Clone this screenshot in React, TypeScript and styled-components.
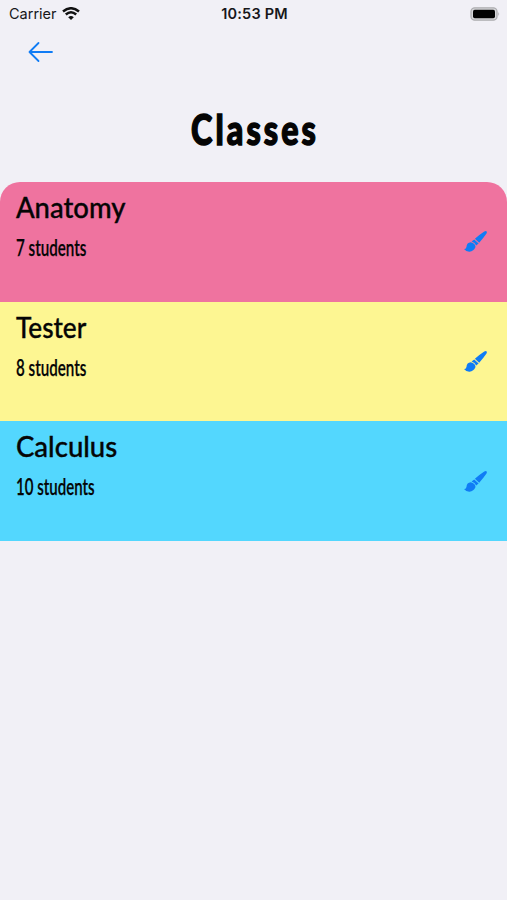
import React from "react";
import styled, { createGlobalStyle } from "styled-components";

const GlobalStyle = createGlobalStyle`
  * { box-sizing: border-box; }
  body { margin: 0; background: #f1f0f6; color: #050505; }
  button { appearance: none; border: 0; padding: 0; background: none; }
`;
const Screen = styled.main`
  min-height: 900px;
  background: #f1f0f6;
  overflow: hidden;
`;
const StatusBar = styled.header`
  height: 28px;
  display: grid;
  grid-template-columns: 1fr auto 1fr;
  align-items: center;
  padding: 0 7px 0 9px;
  font: 400 14.5px/28px Inter, sans-serif;
  color: #17171a;
`;
const Carrier = styled.div`
  display: flex;
  align-items: center;
  gap: 5px;
  letter-spacing: 0;
`;
const Time = styled.time`
  font-weight: 600;
  font-size: 14.5px;
  letter-spacing: 0.2px;
`;
const BatterySlot = styled.div`
  display: flex;
  justify-content: flex-end;
`;
const Navigation = styled.nav`
  height: 48px;
  padding: 13px 0 0 28px;
`;
const IconButton = styled.button`
  display: block;
  line-height: 0;
  color: #107cf5;
`;
const Title = styled.h1`
  height: 106px;
  margin: 0;
  padding-top: 25px;
  text-align: center;
  font: 900 42px/56px Lato, sans-serif;
  letter-spacing: 4px;
`;
const TitleText = styled.span`
  display: inline-block;
  transform: scaleX(0.77);
  -webkit-text-stroke: 1.5px #050505;
  stroke-linejoin: round;
  paint-order: stroke fill;
  margin-right: -4px;
`;
const ClassList = styled.section`
  border-radius: 20px 20px 0 0;
  overflow: hidden;
`;
const ClassRow = styled.article<{ $color: string }>`
  height: 119.67px;
  display: flex;
  align-items: center;
  justify-content: space-between;
  padding: 0 19px 0 16px;
  background: ${({ $color }) => $color};
`;
const ClassInfo = styled.div`
  align-self: flex-start;
  padding-top: 7px;
`;
const ClassName = styled.h2<{ $stretch: number }>`
  margin: 0;
  font: 500 29px/36px Lato, sans-serif;
  white-space: nowrap;
  -webkit-text-stroke: 0.35px #050505;
  transform: scaleX(${({ $stretch }) => $stretch});
  transform-origin: left;
`;
const StudentCount = styled.p<{ $stretch: number }>`
  margin: 6px 0 0;
  font: 600 23.5px/32px Lato, sans-serif;
  white-space: nowrap;
  -webkit-text-stroke: 0.25px #050505;
  transform: scaleX(${({ $stretch }) => $stretch});
  transform-origin: left;
`;

const WifiIcon = () => (
  <svg width="18" height="14" viewBox="0 0 18 14" fill="none" stroke="#111" strokeWidth="2.5">
    <path d="M1 4.5Q9-2 17 4.5M3.8 7.5Q9 3.1 14.2 7.5" />
    <path d="M6.2 10.2Q9 7.8 11.8 10.2L9 13Z" fill="#111" stroke="none" />
  </svg>
);
const BatteryIcon = () => (
  <svg width="30" height="14" viewBox="0 0 30 14">
    <rect x="1" y="0.8" width="26" height="12.4" rx="3.7" fill="#d7d7da" stroke="#adadb0" strokeWidth="1.3" />
    <rect x="3" y="2.8" width="22" height="8.4" rx="1.7" fill="#020202" />
    <path d="M28.3 4.8Q30 7 28.3 9.2Z" fill="#a7a7aa" />
  </svg>
);
const BackIcon = () => (
  <svg width="26" height="22" viewBox="0 0 26 22" fill="none" stroke="currentColor" strokeWidth="1.8" strokeLinecap="round" strokeLinejoin="round">
    <path d="M24 11H1.5M10.5 2L1.5 11L10.5 20" />
  </svg>
);
const BrushIcon = () => (
  <svg width="24" height="23" viewBox="0 0 24 23" fill="currentColor">
    <path d="M20.3 1.4Q22.2.6 22.7 1.6Q23.2 2.4 22.5 3.5Q19 8.6 15.2 12.7L10.9 8.8Q15.5 4.4 20.3 1.4Z" />
    <path d="M10.2 9.4L14.6 13.4L12.2 15.5Q10.8 12.3 7.6 11.4Z" />
    <path d="M6.8 12.3Q11.3 13.2 11.5 17.1Q9.8 21.4 5.4 21.7Q2.2 21.8 0 19Q2.2 19.3 2.5 16.7Q2.7 12.7 6.8 12.3Z" />
  </svg>
);

const classes = [
  { name: "Anatomy", count: 7, color: "#ef739f", nameStretch: 0.945, countStretch: 0.645 },
  { name: "Tester", count: 8, color: "#fdf692", nameStretch: 0.9, countStretch: 0.645 },
  { name: "Calculus", count: 10, color: "#53d7fe", nameStretch: 0.95, countStretch: 0.64 },
];

export default function App() {
  return (
    <Screen>
      <GlobalStyle />
      <StatusBar>
        <Carrier>Carrier <WifiIcon /></Carrier>
        <Time>10:53 PM</Time>
        <BatterySlot><BatteryIcon /></BatterySlot>
      </StatusBar>
      <Navigation>
        <IconButton aria-label="Back"><BackIcon /></IconButton>
      </Navigation>
      <Title><TitleText>Classes</TitleText></Title>
      <ClassList>
        {classes.map((item) => (
          <ClassRow key={item.name} $color={item.color}>
            <ClassInfo>
              <ClassName $stretch={item.nameStretch}>{item.name}</ClassName>
              <StudentCount $stretch={item.countStretch}>{item.count} students</StudentCount>
            </ClassInfo>
            <IconButton aria-label={`Edit ${item.name} color`}><BrushIcon /></IconButton>
          </ClassRow>
        ))}
      </ClassList>
    </Screen>
  );
}
